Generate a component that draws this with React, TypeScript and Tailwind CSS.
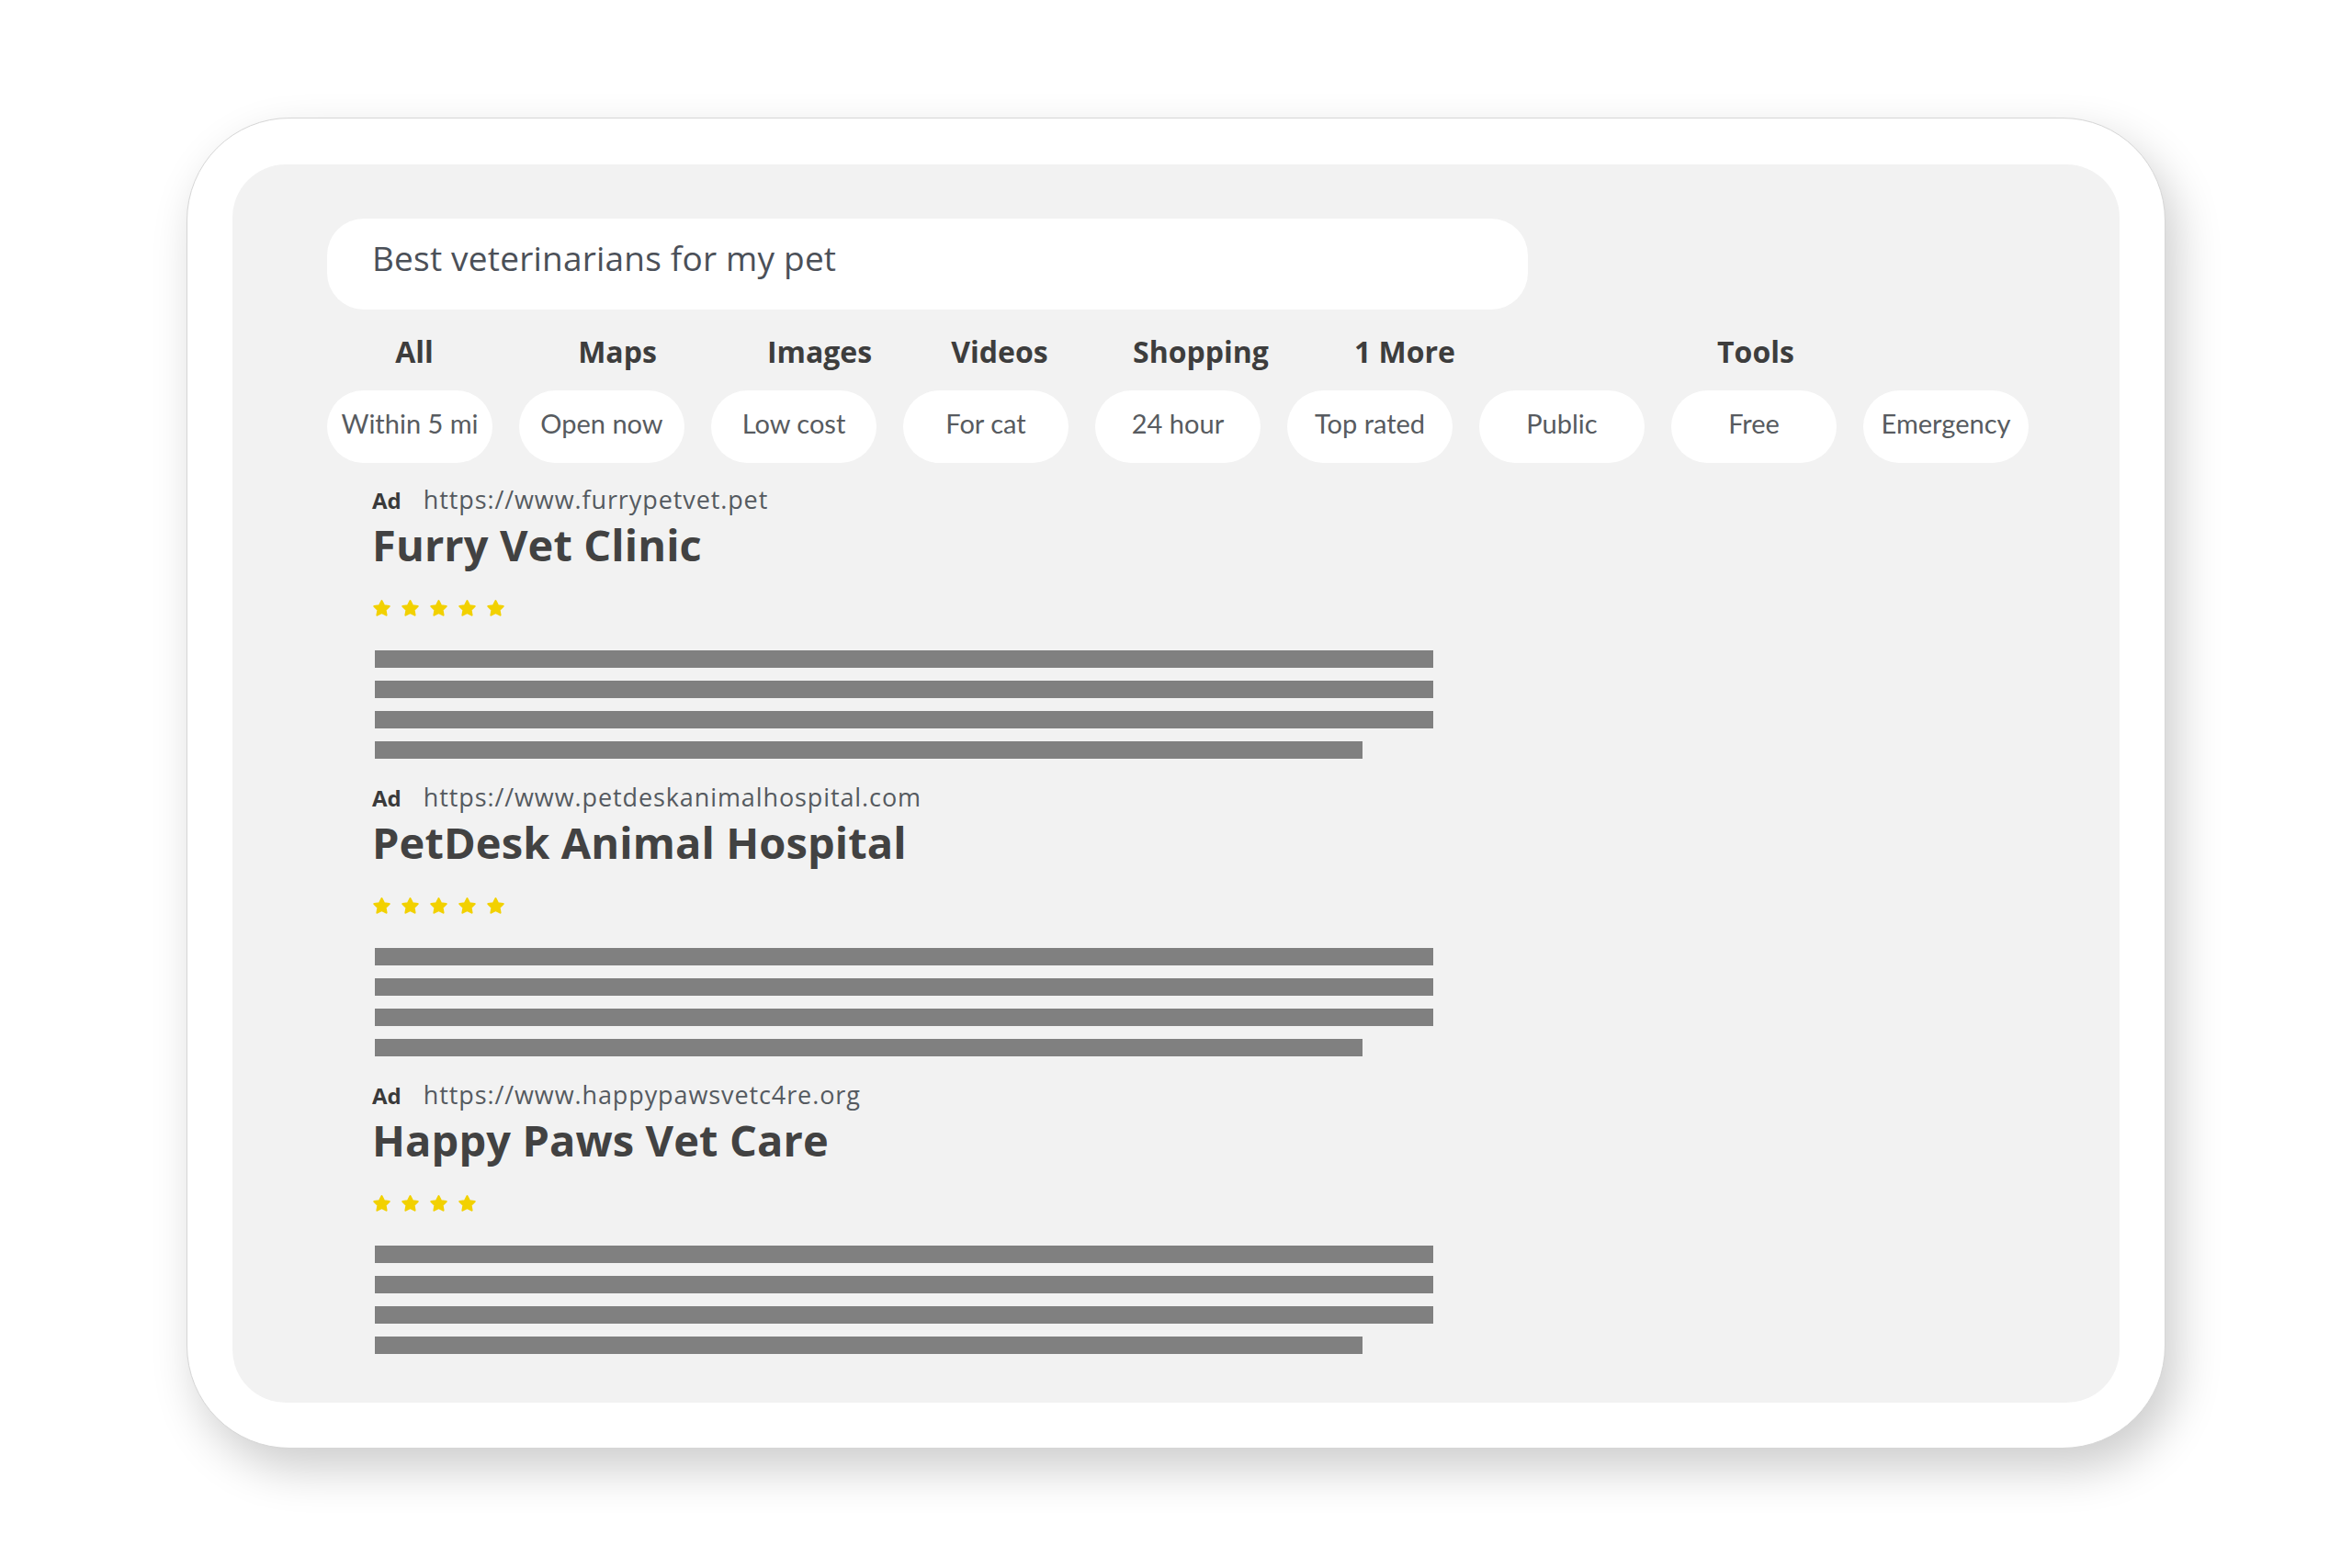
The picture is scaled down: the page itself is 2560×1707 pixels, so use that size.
import React from 'react';

const tabs = [
  { label: 'All', w: 'w-[190px]' },
  { label: 'Maps', w: 'w-[252px]' },
  { label: 'Images', w: 'w-[188px]' },
  { label: 'Videos', w: 'w-[204px]' },
  { label: 'Shopping', w: 'w-[234px]' },
  { label: '1 More', w: 'w-[210px]' },
];

const chips = ['Within 5 mi', 'Open now', 'Low cost', 'For cat', '24 hour', 'Top rated', 'Public', 'Free', 'Emergency'];

const results = [
  { url: 'https://www.furrypetvet.pet', title: 'Furry Vet Clinic', stars: 5 },
  { url: 'https://www.petdeskanimalhospital.com', title: 'PetDesk Animal Hospital', stars: 5 },
  { url: 'https://www.happypawsvetc4re.org', title: 'Happy Paws Vet Care', stars: 4 },
];

function Star() {
  return (
    <svg width="21" height="20" viewBox="0 0 24 23" className="shrink-0">
      <polygon
        points="12,2.5 14.9,8.4 21.4,9.3 16.7,13.9 17.8,20.3 12,17.3 6.2,20.3 7.3,13.9 2.6,9.3 9.1,8.4"
        fill="#f2d100"
        stroke="#f2d100"
        strokeWidth="2.4"
        strokeLinejoin="round"
      />
    </svg>
  );
}

function Result({ url, title, stars, first }: { url: string; title: string; stars: number; first: boolean }) {
  return (
    <div className={first ? 'mt-[26px]' : 'mt-[28px]'}>
      {/* Ad + url */}
      <div className="flex items-baseline font-['Open_Sans',sans-serif]">
        <span className="text-[24px] font-bold leading-none text-[#3a3a3a]">Ad</span>
        <span className="ml-[24px] text-[27px] leading-none tracking-[0.9px] text-[#555a60]">{url}</span>
      </div>
      <h2 className="mt-[13px] font-['Open_Sans',sans-serif] text-[47px] font-bold leading-none tracking-[0.1px] text-[#424242]">
        {title}
      </h2>
      <div className="mt-[36px] flex h-[18px] items-center gap-[10px]">
        {Array.from({ length: stars }).map((_, i) => (
          <Star key={i} />
        ))}
      </div>
      {/* text placeholder lines */}
      <div className="mt-[37px] flex flex-col gap-[14px] pl-[3px]">
        <div className="h-[19px] w-[1152px] bg-[#808080]" />
        <div className="h-[19px] w-[1152px] bg-[#808080]" />
        <div className="h-[19px] w-[1152px] bg-[#808080]" />
        <div className="h-[19px] w-[1075px] bg-[#808080]" />
      </div>
    </div>
  );
}

export default function App() {
  return (
    <div className="flex min-h-screen w-full justify-center bg-white pt-[128px] font-['Lato',sans-serif]">
      <div className="h-[1449px] w-[2154px] rounded-[112px] border border-[#d6d6d6] bg-white pb-[49px] pl-[49px] pr-[49px] pt-[50px] shadow-[12px_22px_50px_rgba(0,0,0,0.2)]">
        <div className="h-full w-full rounded-[58px] bg-[#f2f2f2] pl-[103px] pt-[59px]">
          {/* Search bar */}
          <div className="flex h-[99px] w-[1307px] items-center rounded-[40px] bg-white pl-[49px] pb-[14px]">
            <span className="font-['Open_Sans',sans-serif] text-[37px] leading-none tracking-[0.2px] text-[#4b5058]">
              Best veterinarians for my pet
            </span>
          </div>

          {/* Tabs */}
          <div className="mt-[30px] flex font-['Open_Sans',sans-serif] text-[32px] font-bold leading-none text-[#3d3d3d]">
            {tabs.map((t) => (
              <div key={t.label} className={`${t.w} text-center`}>
                {t.label}
              </div>
            ))}
            <div className="w-[177px]" />
            <div className="w-[200px] text-center">Tools</div>
          </div>

          {/* Filter chips */}
          <div className="mt-[26px] flex gap-[29px]">
            {chips.map((c) => (
              <div
                key={c}
                className="flex h-[79px] w-[180px] items-center justify-center rounded-[40px] bg-white pb-[8px] text-[29px] leading-none text-[#575b60]"
              >
                {c}
              </div>
            ))}
          </div>

          {/* Results */}
          <div className="ml-[49px]">
            {results.map((r, i) => (
              <Result key={r.title} {...r} first={i === 0} />
            ))}
          </div>
        </div>
      </div>
    </div>
  );
}
